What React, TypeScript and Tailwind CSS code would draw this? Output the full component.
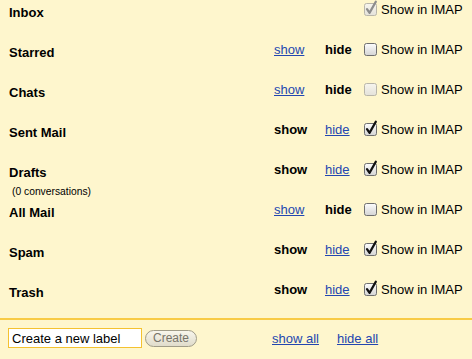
import React from "react";

type Row = {
  name: string;
  sub?: string;
  mode: "none" | "shown" | "hidden";
  checked: boolean;
  disabled?: boolean;
};

const rows: Row[] = [
  { name: "Inbox", mode: "none", checked: true, disabled: true },
  { name: "Starred", mode: "hidden", checked: false },
  { name: "Chats", mode: "hidden", checked: false, disabled: true },
  { name: "Sent Mail", mode: "shown", checked: true },
  { name: "Drafts", sub: "(0 conversations)", mode: "shown", checked: true },
  { name: "All Mail", mode: "hidden", checked: false },
  { name: "Spam", mode: "shown", checked: true },
  { name: "Trash", mode: "shown", checked: true },
];

function Check({ checked, disabled }: { checked: boolean; disabled?: boolean }) {
  const id = disabled ? "gd" : "ge";
  return (
    <svg width="14" height="15" viewBox="0 0 14 15" className="block overflow-visible">
      <defs>
        <linearGradient id={id} x1="0" y1="0" x2="0" y2="1">
          <stop offset="0" stopColor={disabled ? "#f7f5ee" : "#fdfdfd"} />
          <stop offset="1" stopColor={disabled ? "#e4e2da" : "#d4d4d4"} />
        </linearGradient>
      </defs>
      <rect
        x="0.5"
        y="2.5"
        width="12"
        height="12"
        rx="2"
        fill={`url(#${id})`}
        stroke={disabled ? "#b9b6aa" : "#6f6f6f"}
      />
      {checked && (
        <path
          d="M3 8.2 L5.6 11.8 L11.8 0.8"
          fill="none"
          stroke={disabled ? "#8d8d8d" : "#111"}
          strokeWidth="2.3"
          strokeLinecap="round"
          strokeLinejoin="round"
        />
      )}
    </svg>
  );
}

export default function App() {
  return (
    <div
      className="w-[472px] h-[359px] bg-[#fef6cd] text-[13px] text-black overflow-hidden"
      style={{ fontFamily: '"Liberation Sans", Arial, sans-serif' }}
    >
      <div className="flex flex-col">
        {rows.map((r) => (
          <div key={r.name} className="flex h-[40px]">
            <div className="w-[274px] pl-[9px] pt-[5px]">
              <div className="font-bold leading-[15px]">{r.name}</div>
              {r.sub && <div className="text-[10.3px] leading-[12px] mt-[6px] pl-[3px]">{r.sub}</div>}
            </div>
            <div className="flex pt-[2px] leading-[15px]">
              <div className="w-[51px]">
                {r.mode === "hidden" && <span className="text-[#2346b0] underline cursor-pointer">show</span>}
                {r.mode === "shown" && <span className="font-bold">show</span>}
              </div>
              <div className="w-[39px]">
                {r.mode === "hidden" && <span className="font-bold">hide</span>}
                {r.mode === "shown" && <span className="text-[#2346b0] underline cursor-pointer">hide</span>}
              </div>
              <div className="w-[17px] -mt-[1px]">
                <Check checked={r.checked} disabled={r.disabled} />
              </div>
              <div>Show in IMAP</div>
            </div>
          </div>
        ))}
      </div>
      <div className="h-[2px] bg-[#f8cb45] -mt-[2px]" />
      <div className="flex items-center pt-[8px]">
        <div className="ml-[8px] w-[134px] h-[20px] bg-white border border-[#f4c230] flex items-center pl-[3px]">
          <span className="leading-[15px]">Create a new label</span>
        </div>
        <div className="ml-[3px] w-[52px] h-[17px] rounded-full border border-[#a09c88] bg-gradient-to-b from-[#f8f6ec] to-[#e0dccb] text-[#77746a] text-[12px] leading-[15px] flex items-center justify-center">
          Create
        </div>
        <div className="ml-[75px] flex gap-[18px] leading-[15px]">
          <span className="text-[#2346b0] underline">show all</span>
          <span className="text-[#2346b0] underline">hide all</span>
        </div>
      </div>
    </div>
  );
}
